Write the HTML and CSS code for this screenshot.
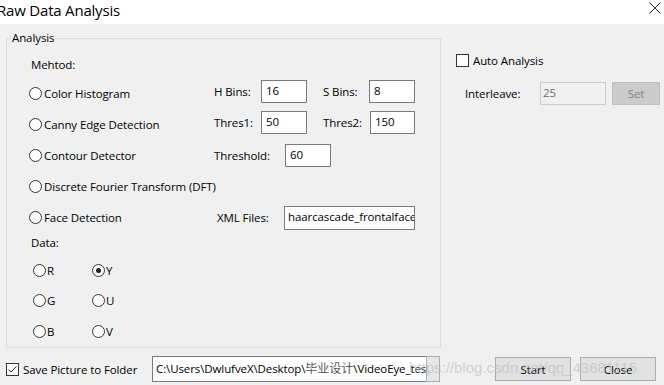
FILE: index.html
```html
<!DOCTYPE html>
<html>
<head>
<meta charset="utf-8">
<link rel="stylesheet" href="styles.css">
</head>
<body>
<div class="window">
  <div class="titlebar">
    <span class="title">Raw Data Analysis</span>
    <svg class="close-x" width="12" height="12" viewBox="0 0 12 12"><path d="M0.5 0.5 L11.5 11.5 M11.5 0.5 L0.5 11.5" stroke="#222" stroke-width="1" fill="none"/></svg>
  </div>
  <div class="content">
    <div class="main">
      <fieldset class="group">
        <legend>Analysis</legend>
        <div class="caption">Mehtod:</div>
        <div class="row">
          <label class="method"><span class="radio"></span>Color Histogram</label>
          <span class="params up">
            <span class="plabel w47">H Bins:</span><span class="edit w46">16</span>
            <span class="plabel w46 ml16">S Bins:</span><span class="edit w46">8</span>
          </span>
        </div>
        <div class="row">
          <label class="method"><span class="radio"></span>Canny Edge Detection</label>
          <span class="params up">
            <span class="plabel w47">Thres1:</span><span class="edit w46">50</span>
            <span class="plabel w47 ml16">Thres2:</span><span class="edit w45">150</span>
          </span>
        </div>
        <div class="row">
          <label class="method"><span class="radio"></span>Contour Detector</label>
          <span class="params">
            <span class="plabel w71">Threshold:</span><span class="edit w46">60</span>
          </span>
        </div>
        <div class="row">
          <label class="method"><span class="radio"></span>Discrete Fourier Transform (DFT)</label>
        </div>
        <div class="row">
          <label class="method"><span class="radio"></span>Face Detection</label>
          <span class="params">
            <span class="plabel w67 ml3">XML Files:</span><span class="edit w131 tall">haarcascade_frontalface_alt.xml</span>
          </span>
        </div>
        <div class="caption data">Data:</div>
        <div class="chan-grid">
          <label class="chan"><span class="radio"></span>R</label>
          <label class="chan"><span class="radio checked"></span>Y</label>
          <label class="chan"><span class="radio"></span>G</label>
          <label class="chan"><span class="radio"></span>U</label>
          <label class="chan"><span class="radio"></span>B</label>
          <label class="chan"><span class="radio"></span>V</label>
        </div>
      </fieldset>
      <div class="side">
        <label class="check-row"><span class="checkbox"></span>Auto Analysis</label>
        <div class="interleave">
          <span class="ilabel">Interleave:</span>
          <span class="edit disabled w66">25</span>
          <span class="btn set">Set</span>
        </div>
      </div>
    </div>
    <div class="bottom">
      <label class="check-row save"><span class="checkbox checked"><svg width="11" height="11" viewBox="0 0 11 11"><path d="M1.5 5.5 L4 8 L9.5 2.5" stroke="#333" stroke-width="1" fill="none"/></svg></span>Save Picture to Folder</label>
      <div class="path-wrap">
        <span class="path">C:\Users\DwlufveX\Desktop\<span class="cjk">毕业设计</span>\VideoEye_test\out</span>
        <span class="path-btn"></span>
      </div>
      <span class="btn action start">Start</span>
      <span class="btn action">Close</span>
    </div>
    <div class="watermark">https://blog.csdn.net/qq_43681115</div>
  </div>
</div>
</body>
</html>
```
FILE: styles.css
```css
* { box-sizing: border-box; }
html, body { margin: 0; padding: 0; }
body {
  width: 664px;
  height: 385px;
  overflow: hidden;
  background: #f0f0f0;
  font-family: "Open Sans", "Noto Sans", sans-serif;
  font-size: 11.5px;
  letter-spacing: -0.1px;
  color: #000;
}
.window { position: relative; width: 664px; height: 385px; }
.titlebar {
  height: 24px;
  background: #fff;
  display: flex;
  align-items: center;
  justify-content: space-between;
  padding: 0 3px 0 0;
}
.title {
  font-size: 15px;
  letter-spacing: -0.2px;
  margin-left: -3px;
  margin-top: -5px;
}
.close-x { margin-top: -8px; }
.content { position: relative; height: 361px; }
.main { display: flex; }
.group {
  margin: 7px 0 0 6px;
  width: 435px;
  height: 317px;
  border: 1px solid #dcdcdc;
  padding: 0 0 0 22px;
  min-width: 0;
}
.group legend {
  padding: 0 1px;
  margin-left: -18px;
  line-height: 14px;
}
.caption {
  height: 20px;
  line-height: 20px;
  padding-left: 2px;
  margin-top: 10px;
  margin-bottom: 3px;
}
.row {
  display: flex;
  align-items: center;
  height: 31px;
}
.params { display: flex; align-items: center; }
.params.up { margin-top: -5px; }
.method {
  display: flex;
  align-items: center;
  width: 185px;
  flex-shrink: 0;
  white-space: nowrap;
}
.radio {
  width: 13px;
  height: 13px;
  border: 1px solid #333;
  border-radius: 50%;
  background: #fff;
  margin-right: 2px;
  flex-shrink: 0;
  position: relative;
}
.radio.checked::after {
  content: "";
  position: absolute;
  left: 3px; top: 3px;
  width: 5px; height: 5px;
  border-radius: 50%;
  background: #222;
}
.plabel { flex-shrink: 0; white-space: nowrap; }
.w47 { width: 47px; }
.w46 { width: 46px; }
.w45 { width: 45px; }
.w71 { width: 71px; }
.w67 { width: 67px; }
.w66 { width: 66px; }
.w131 { width: 131px; }
.ml16 { margin-left: 16px; }
.ml3 { margin-left: 3px; }
.edit {
  height: 23px;
  border: 1px solid #7a7a7a;
  background: #fff;
  padding: 1px 0 0 4px;
  line-height: 18px;
  white-space: nowrap;
  overflow: hidden;
  flex-shrink: 0;
}
.edit.tall { height: 24px; padding-left: 3px; }
.caption.data { margin-top: 0; margin-bottom: 0; height: 19px; line-height: 19px; }
.chan-grid {
  display: grid;
  grid-template-columns: 59px 40px;
  grid-auto-rows: 30.5px;
  padding-left: 4px;
  margin-top: 3px;
}
.chan { display: flex; align-items: center; }
.chan .radio { margin-right: 1px; }
.side {
  padding: 29px 0 0 15px;
  flex: 1;
}
.check-row { display: flex; align-items: center; white-space: nowrap; }
.checkbox {
  width: 13px;
  height: 13px;
  border: 1px solid #333;
  background: #fff;
  margin-right: 4px;
  display: flex;
  align-items: center;
  justify-content: center;
  flex-shrink: 0;
}
.interleave {
  display: flex;
  align-items: center;
  margin-top: 14px;
  padding-left: 9px;
}
.ilabel { width: 75px; }
.edit.disabled {
  border-color: #ccc;
  background: #f0f0f0;
  color: #6d6d6d;
  padding-left: 2px;
}
.btn {
  display: flex;
  align-items: center;
  justify-content: center;
  flex-shrink: 0;
}
.set {
  width: 48px;
  height: 23px;
  margin-left: 6px;
  background: #cccccc;
  border: 1px solid #bfbfbf;
  color: #838383;
}
.bottom {
  display: flex;
  align-items: center;
  margin-top: 8px;
  padding-left: 6px;
}
.save { width: 146px; }
.path-wrap {
  display: flex;
  width: 288px;
  height: 26px;
}
.path {
  flex: 1;
  border: 1px solid #7a7a7a;
  border-right: none;
  background: #fff;
  padding: 2px 0 0 3px;
  line-height: 18px;
  white-space: nowrap;
  overflow: hidden;
}
.cjk { font-family: "Noto Sans CJK SC", sans-serif; color: #555; font-size: 12px; letter-spacing: 0; }
.path-btn {
  width: 14px;
  border: 1px solid #adadad;
  background: #e6e6e6;
}
.action {
  width: 76px;
  height: 24px;
  background: #e1e1e1;
  border: 1px solid #adadad;
  margin-left: 9px;
}
.start { margin-left: 55px; }
.watermark {
  position: absolute;
  left: 409px;
  top: 335px;
  font-family: "Liberation Sans", sans-serif;
  font-size: 15px;
  letter-spacing: 0;
  color: rgba(185, 185, 185, 0.6);
  white-space: nowrap;
  pointer-events: none;
}
```
